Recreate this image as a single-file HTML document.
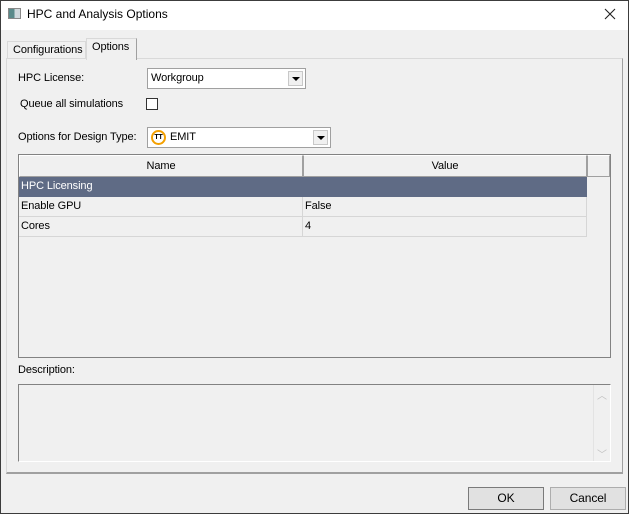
<!DOCTYPE html><html><head><style>
*{box-sizing:border-box;margin:0;padding:0}
body{width:629px;height:514px;background:#f0f0f0;font-family:"Liberation Sans",sans-serif;font-size:11px;letter-spacing:-0.1px;color:#000;position:relative;overflow:hidden}
.a{position:absolute}
.win{left:0;top:0;width:629px;height:514px;border:1px solid #3c3c3c}
.title{left:1px;top:1px;width:627px;height:29px;background:#fff}
.btn{background:#e1e1e1;border:1px solid #adadad;text-align:center;line-height:21px;font-size:12px}
.dd{background:#fff;border:1px solid #a0a0a0}
.arr{position:absolute;right:2px;top:2px;width:15px;height:15px;background:#f0f0f0;border:1px solid #c8c8c8}
.arr:after{content:"";position:absolute;left:3px;top:5px;border-left:4px solid transparent;border-right:4px solid transparent;border-top:4px solid #000}
.cell{position:absolute;height:20px;line-height:19px;padding-left:2px;border-bottom:1px solid #d6d6d6;border-right:1px solid #d6d6d6}
</style></head><body>
<div class="a win"></div>
<div class="a title"></div>
<div class="a" style="left:8px;top:8px;width:13px;height:11px;border:1px solid #888;background:linear-gradient(90deg,#5a8a8a 0 50%,#cfd8dc 50%)"></div>
<div class="a" style="left:27px;top:7px;font-size:12px;letter-spacing:0">HPC and Analysis Options</div>
<svg class="a" style="left:604px;top:8px" width="12" height="12"><path d="M1 1L11 11M11 1L1 11" stroke="#222" stroke-width="1.1"/></svg>
<!-- tabs -->
<div class="a" style="left:7px;top:41px;width:79px;height:18px;border:1px solid #d9d9d9;border-bottom:none;background:#f0f0f0"></div>
<div class="a" style="left:13px;top:44px">Configurations</div>
<div class="a" style="left:86px;top:38px;width:51px;height:22px;border:1px solid #d9d9d9;border-right:1px solid #a0a0a0;border-bottom:none;background:#f0f0f0;z-index:2"></div>
<div class="a" style="left:92px;top:41px;z-index:3">Options</div>
<div class="a" style="left:6px;top:58px;width:617px;height:416px;border:1px solid #d9d9d9;border-right:1px solid #a0a0a0;border-bottom:2px solid #a0a0a0"></div>
<div class="a" style="left:18px;top:72px">HPC License:</div>
<div class="a dd" style="left:147px;top:68px;width:159px;height:21px"><span style="position:absolute;left:3px;top:3px">Workgroup</span><div class="arr"></div></div>
<div class="a" style="left:20px;top:98px">Queue all simulations</div>
<div class="a" style="left:146px;top:98px;width:12px;height:12px;border:1px solid #333;background:#fff"></div>
<div class="a" style="left:18px;top:131px">Options for Design Type:</div>
<div class="a dd" style="left:147px;top:127px;width:184px;height:21px"><span style="position:absolute;left:3px;top:2px;width:15px;height:15px;border:2px solid #f4a000;border-radius:50%;font-size:7px;line-height:11px;text-align:center;font-weight:bold;color:#000">TT</span><span style="position:absolute;left:22px;top:3px">EMIT</span><div class="arr"></div></div>
<!-- grid -->
<div class="a" style="left:18px;top:154px;width:593px;height:204px;border:1px solid #828282;background:#f0f0f0"></div>
<div class="a" style="left:19px;top:155px;width:284px;height:22px;border:1px solid #a0a0a0;border-top-color:#fff;border-left-color:#fff;text-align:center;line-height:20px">Name</div>
<div class="a" style="left:303px;top:155px;width:284px;height:22px;border:1px solid #a0a0a0;border-top-color:#fff;text-align:center;line-height:20px">Value</div>
<div class="a" style="left:587px;top:155px;width:23px;height:22px;border:1px solid #a0a0a0;border-top-color:#fff"></div>
<div class="cell" style="left:19px;top:177px;width:568px;background:#5f6b85;color:#fff;border-color:#5f6b85">HPC Licensing</div>
<div class="cell" style="left:19px;top:197px;width:284px">Enable GPU</div>
<div class="cell" style="left:303px;top:197px;width:284px">False</div>
<div class="cell" style="left:19px;top:217px;width:284px">Cores</div>
<div class="cell" style="left:303px;top:217px;width:284px">4</div>
<div class="a" style="left:18px;top:364px">Description:</div>
<div class="a" style="left:18px;top:384px;width:593px;height:78px;border:1px solid #828282;border-right-color:#fff;border-bottom-color:#fff"></div>
<div class="a" style="left:593px;top:385px;width:17px;height:76px;border-left:1px solid #e3e3e3;color:#c0c0c0;font-size:10px;text-align:center"><div style="margin-top:2px">︿</div><div style="margin-top:44px">﹀</div></div>
<div class="a btn" style="left:468px;top:487px;width:76px;height:23px;border-color:#7a7a7a">OK</div>
<div class="a btn" style="left:550px;top:487px;width:76px;height:23px">Cancel</div>
</body></html>
